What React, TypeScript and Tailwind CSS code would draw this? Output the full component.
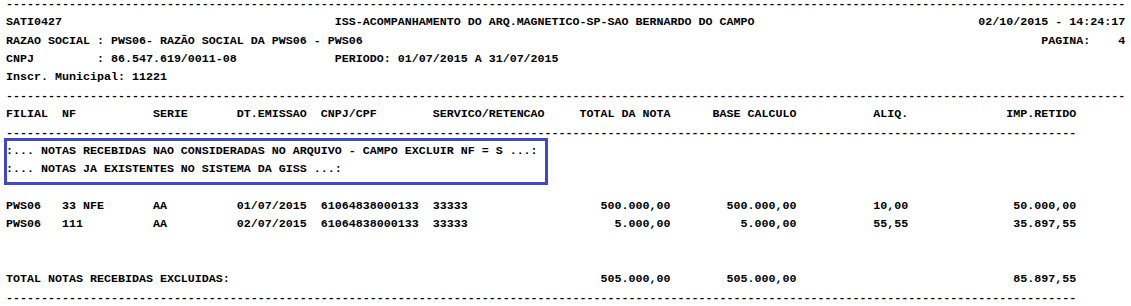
const LEFT = [0, 8, 21, 33, 45, 61];
const RIGHT = [95, 113, 129, 153];
const FULL = 160;
const NARROW = 153;

// monta uma linha do relatorio com colunas fixas
function row(left: string[], right: string[] = []) {
  let s = "";
  left.forEach((t, i) => {
    s = s.padEnd(LEFT[i]) + t;
  });
  right.forEach((t, i) => {
    if (t) s = s.padEnd(RIGHT[i] - t.length) + t;
  });
  return s;
}

const notas = [
  { filial: "PWS06", nf: "33 NFE", serie: "AA", emissao: "01/07/2015", cnpj: "61064838000133", servico: "33333", total: "500.000,00", base: "500.000,00", aliq: "10,00", retido: "50.000,00" },
  { filial: "PWS06", nf: "111", serie: "AA", emissao: "02/07/2015", cnpj: "61064838000133", servico: "33333", total: "5.000,00", base: "5.000,00", aliq: "55,55", retido: "35.897,55" },
];

function Line({ text = "" }: { text?: string }) {
  return <div className="h-[18.36px] whitespace-pre">{text}</div>;
}

export default function App() {
  const header = [
    "SATI0427".padEnd(47) +
      "ISS-ACOMPANHAMENTO DO ARQ.MAGNETICO-SP-SAO BERNARDO DO CAMPO".padEnd(92) +
      "02/10/2015 - 14:24:17",
    "RAZAO SOCIAL : PWS06- RAZÃO SOCIAL DA PWS06 - PWS06".padEnd(148) + "PAGINA:    4",
    "CNPJ         : 86.547.619/0011-08".padEnd(47) + "PERIODO: 01/07/2015 A 31/07/2015",
    "Inscr. Municipal: 11221",
  ];

  return (
    <div className="min-h-screen bg-white">
      <div className="-mt-[5px] px-[6px] font-['Liberation_Mono','Courier_New',monospace] text-[11.667px] font-bold leading-[18.36px] text-black">
        <Line text={"-".repeat(FULL)} />
        {header.map((h, i) => (
          <Line key={i} text={h} />
        ))}
        <Line text={"-".repeat(FULL)} />
        <Line
          text={row(
            ["FILIAL", "NF", "SERIE", "DT.EMISSAO", "CNPJ/CPF", "SERVICO/RETENCAO"],
            ["TOTAL DA NOTA", "BASE CALCULO", "ALIQ.", "IMP.RETIDO"]
          )}
        />
        <Line text={"-".repeat(NARROW)} />
        <div className="relative">
          <div className="absolute -top-[4px] -bottom-[6px] -left-[2px] w-[544px] border-[3px] border-[#3f48cc]" />
          <Line text=":... NOTAS RECEBIDAS NAO CONSIDERADAS NO ARQUIVO - CAMPO EXCLUIR NF = S ...:" />
          <Line text=":... NOTAS JA EXISTENTES NO SISTEMA DA GISS ...:" />
        </div>
        <Line />
        {notas.map((n, i) => (
          <Line
            key={i}
            text={row(
              [n.filial, n.nf, n.serie, n.emissao, n.cnpj, n.servico],
              [n.total, n.base, n.aliq, n.retido]
            )}
          />
        ))}
        <Line />
        <Line />
        <Line text={row(["TOTAL NOTAS RECEBIDAS EXCLUIDAS:"], ["505.000,00", "505.000,00", "", "85.897,55"])} />
        <Line text={"-".repeat(NARROW)} />
      </div>
    </div>
  );
}
